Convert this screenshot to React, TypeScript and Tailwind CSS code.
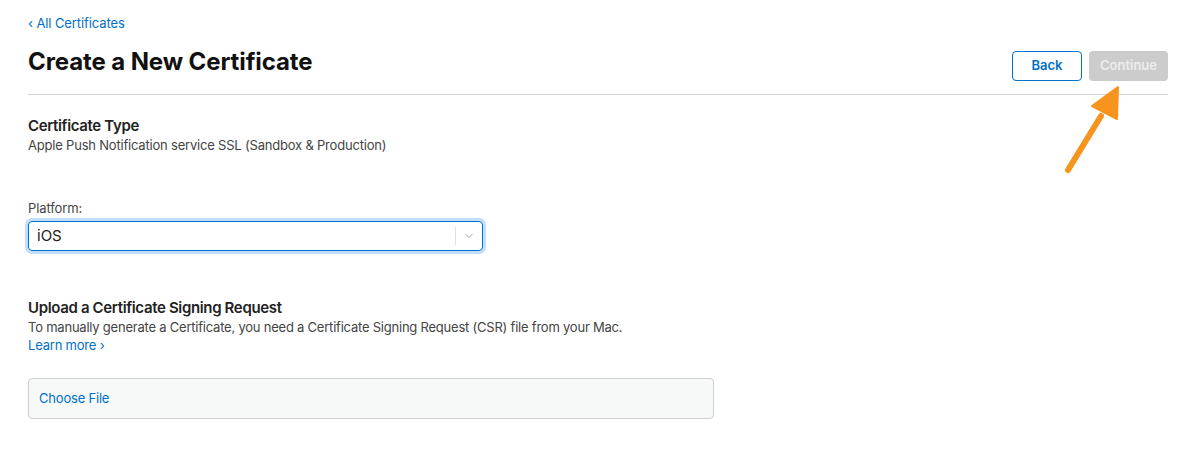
import { ChevronDown } from "lucide-react";

const font = { fontFamily: "Inter, 'Noto Sans', sans-serif" };

export default function App() {
    return (
        <div className="w-[1185px] h-[450px] bg-white relative overflow-hidden text-[#1d1d1f]" style={font}>
            <div className="pl-[28px] pr-[17px] pt-[14px]">
                <a className="block text-[13px] leading-[18px] tracking-[-0.1px] text-[#0070c9]">‹ All Certificates</a>

                <div className="mt-[15px] flex justify-between items-start pb-[13px] border-b border-[#d6d6d6]">
                    <h1 className="text-[24px] leading-[30px] font-bold tracking-[-0.1px] text-[#111]">Create a New Certificate</h1>
                    <div className="flex gap-[7px] mt-[4px]">
                        <button className="w-[70px] h-[30px] rounded-[4px] border border-[#0070c9] text-[#0070c9] text-[13px] font-semibold">
                            Back
                        </button>
                        <button className="w-[79px] h-[30px] rounded-[4px] bg-[#cccccc] text-[#ececec] text-[13px] font-semibold">
                            Continue
                        </button>
                    </div>
                </div>

                <div className="mt-[21px]">
                    <h2 className="text-[15px] leading-[20px] font-semibold tracking-[-0.35px] text-[#222]">Certificate Type</h2>
                    <p className="text-[13px] leading-[18px] tracking-[-0.2px] text-[#444]">Apple Push Notification service SSL (Sandbox &amp; Production)</p>
                </div>

                <div className="mt-[45px]">
                    <label className="block text-[13px] leading-[18px] tracking-[-0.1px] text-[#444]">Platform:</label>
                    <div className="mt-[4px] w-[455px] h-[30px] rounded-[4px] border border-[#0070c9] ring-[3px] ring-[#a9d0f5]/70 flex items-center">
                        <span className="flex-1 pl-[8px] text-[15px] text-[#222]">iOS</span>
                        <span className="h-[18px] w-px bg-[#e0e0e0]" />
                        <ChevronDown className="w-[12px] h-[12px] mx-[7px] text-[#888]" strokeWidth={1.5} />
                    </div>
                </div>

                <div className="mt-[47px]">
                    <h2 className="text-[15px] leading-[20px] font-semibold tracking-[-0.35px] text-[#222]">Upload a Certificate Signing Request</h2>
                    <p className="text-[13px] leading-[18px] tracking-[-0.22px] text-[#444]">
                        To manually generate a Certificate, you need a Certificate Signing Request (CSR) file from your Mac.
                    </p>
                    <a className="block text-[13px] leading-[18px] tracking-[-0.2px] text-[#0070c9]">Learn more ›</a>
                </div>

                <div className="mt-[24px] w-[686px] h-[41px] rounded-[4px] border border-[#cfcfcf] bg-[#f7f8f8] flex items-center pl-[10px]">
                    <span className="text-[13px] tracking-[-0.2px] text-[#0070c9]">Choose File</span>
                </div>
            </div>

            <svg className="absolute left-0 top-0 pointer-events-none" width="1185" height="450">
                <line x1="1068" y1="170" x2="1101" y2="116" stroke="#f7941d" strokeWidth="6" strokeLinecap="round" />
                <polygon points="1118,87 1117,119 1092,106" fill="#f7941d" stroke="#f7941d" strokeWidth="2" strokeLinejoin="round" />
            </svg>
        </div>
    );
}
